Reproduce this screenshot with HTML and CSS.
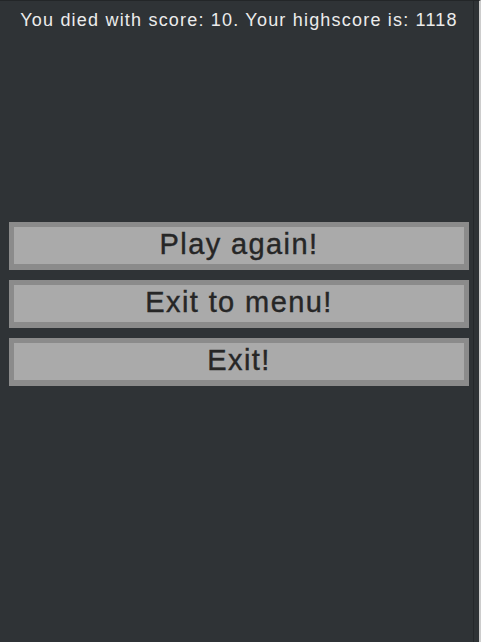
FILE: index.html
```html
<!DOCTYPE html>
<html>
<head>
<meta charset="utf-8">
<link rel="stylesheet" href="styles.css">
</head>
<body>
<div class="window">
  <div class="screen">
    <div class="status">You died with score: 10. Your highscore is: 1118</div>
    <div class="menu">
      <div class="btn">Play again!</div>
      <div class="btn">Exit to menu!</div>
      <div class="btn">Exit!</div>
    </div>
  </div>
  <div class="edge"></div>
</div>
</body>
</html>
```
FILE: styles.css
```css
html, body {
  margin: 0;
  padding: 0;
  background: #2f3336;
}
.window {
  display: flex;
  width: 481px;
  height: 642px;
  box-sizing: border-box;
  border-right: 2px solid #cdcdcd;
  border-top: 1px solid #232628;
  overflow: hidden;
}
.screen {
  width: 473px;
  border-right: 1px solid #25282b;
  display: flex;
  flex-direction: column;
}
.edge {
  flex: 1;
}
.status {
  color: #ececec;
  font-family: "Liberation Sans", Arial, sans-serif;
  font-size: 18px;
  line-height: 20px;
  text-align: center;
  padding-top: 9px;
  padding-left: 5px;
  letter-spacing: 1.2px;
}
.menu {
  margin-top: 192px;
  padding-left: 9px;
  display: flex;
  flex-direction: column;
  gap: 10px;
}
.btn {
  width: 460px;
  height: 48px;
  box-sizing: border-box;
  border: 5px solid #8b8b8b;
  border-bottom-width: 6px;
  background: #aaaaaa;
  color: #262626;
  font-family: "Liberation Sans", Arial, sans-serif;
  font-size: 29px;
  line-height: 35px;
  text-align: center;
  letter-spacing: 1.4px;
  -webkit-text-stroke: 0.4px #262626;
}
```
